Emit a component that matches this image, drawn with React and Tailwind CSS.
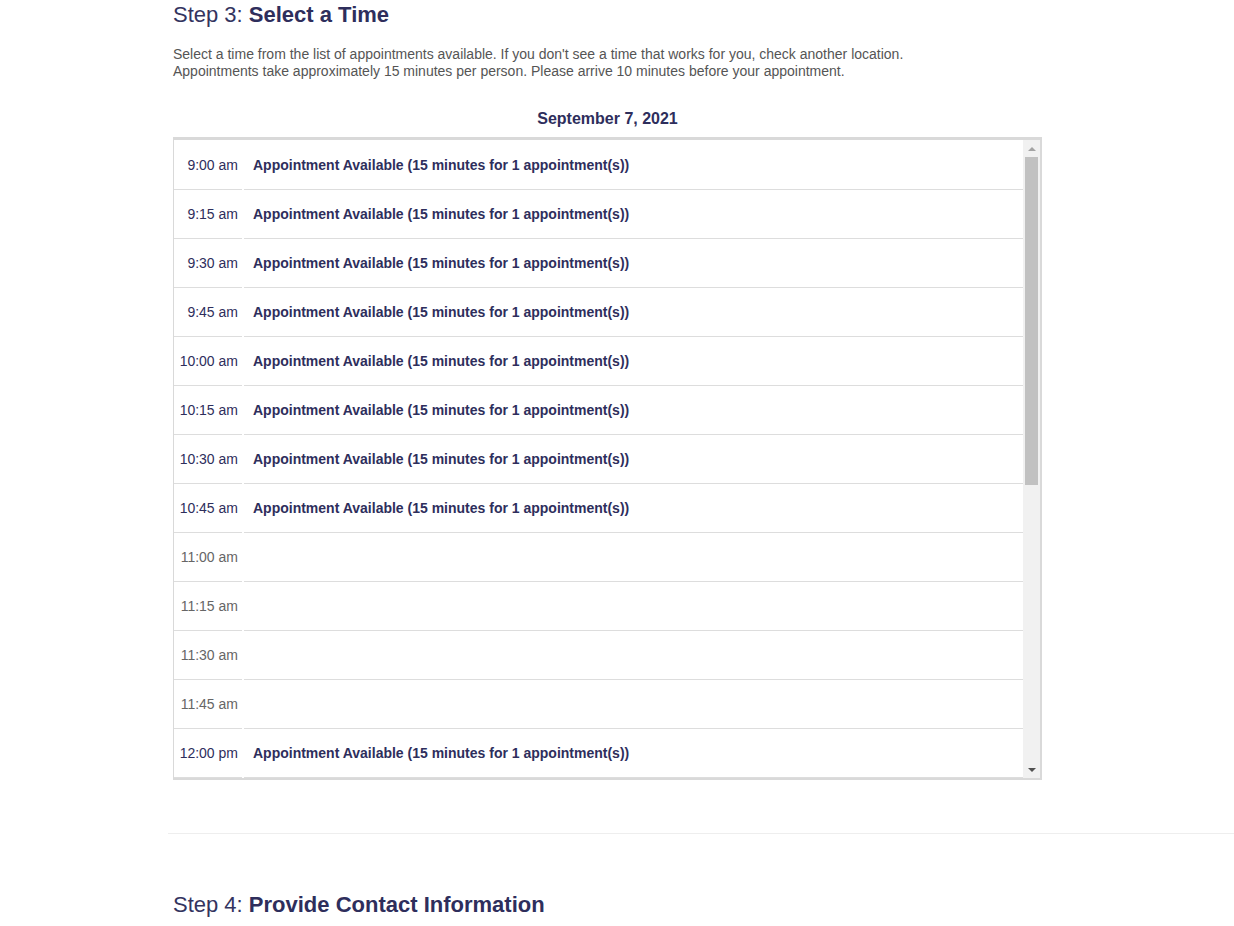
import React from "react";

const rows = [
  ["9:00 am", true],
  ["9:15 am", true],
  ["9:30 am", true],
  ["9:45 am", true],
  ["10:00 am", true],
  ["10:15 am", true],
  ["10:30 am", true],
  ["10:45 am", true],
  ["11:00 am", false],
  ["11:15 am", false],
  ["11:30 am", false],
  ["11:45 am", false],
  ["12:00 pm", true],
];

export default function App() {
  return (
    <div className="min-h-[926px] w-[1234px] overflow-hidden bg-white pt-px font-['Liberation_Sans',Arial,sans-serif]">
      <div className="ml-[168px]">
        <div className="w-[874px] pl-[5px]">
          <h2 className="text-[22px] leading-[28px] text-[#34345f]">
            Step 3: <span className="font-bold text-[#2e2e5c]">Select a Time</span>
          </h2>
          <p className="mt-[17px] text-[14px] leading-[17px] text-[#555]">
            Select a time from the list of appointments available. If you don't see a time that works for you, check another location.
            <br />
            Appointments take approximately 15 minutes per person. Please arrive 10 minutes before your appointment.
          </p>
          <div className="mt-[29px] w-[869px] text-center text-[16px] font-bold leading-[20px] text-[#2e2e5c]">
            September 7, 2021
          </div>
          <div className="mt-[8px] flex h-[643px] w-[869px] border-t-[3px] border-b-[2px] border-l border-r-2 border-[#d9d9d9]">
            <div className="flex-1 overflow-hidden pt-px">
              {rows.map(([t, avail]) => (
                <div key={t} className="flex h-[49px]">
                  <div
                    className={
                      "flex w-[68px] items-center justify-end border-b border-[#dddddd] pr-[4px] text-[14px] " +
                      (avail ? "text-[#2e2e5c]" : "text-[#666666]")
                    }
                  >
                    {t}
                  </div>
                  <div className="ml-[2px] flex flex-1 items-center border-b border-[#dddddd] pl-[9px] text-[14px] font-bold text-[#2e2e5c]">
                    {avail ? "Appointment Available (15 minutes for 1 appointment(s))" : ""}
                  </div>
                </div>
              ))}
              <div className="flex h-[49px]">
                <div className="w-[68px]" />
                <div className="ml-[2px] flex-1" />
              </div>
            </div>
            <div className="flex w-[17px] flex-col bg-[#f1f1f1]">
              <div className="flex h-[17px] items-center justify-center">
                <div className="h-0 w-0 border-x-[4px] border-b-[4px] border-x-transparent border-b-[#a3a3a3]" />
              </div>
              <div className="mx-[2px] h-[328px] bg-[#c1c1c1]" />
              <div className="flex-1" />
              <div className="flex h-[17px] items-center justify-center">
                <div className="h-0 w-0 border-x-[4px] border-t-[4px] border-x-transparent border-t-[#505050]" />
              </div>
            </div>
          </div>
        </div>
        <div className="mt-[53px] h-px w-[1066px] bg-[#eeeeee]" />
        <div className="pl-[5px]">
          <h2 className="mt-[57px] text-[22px] leading-[28px] text-[#34345f]">
            Step 4: <span className="font-bold text-[#2e2e5c]">Provide Contact Information</span>
          </h2>
        </div>
      </div>
    </div>
  );
}
